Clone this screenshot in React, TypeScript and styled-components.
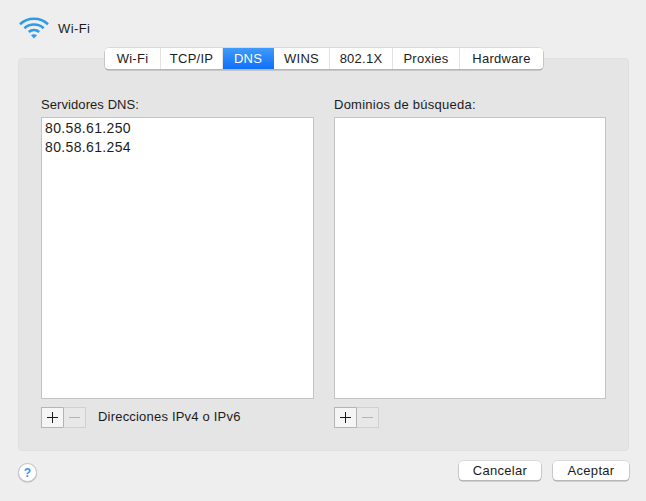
import React from 'react';
import styled, { createGlobalStyle } from 'styled-components';

const tabs = ['Wi-Fi', 'TCP/IP', 'DNS', 'WINS', '802.1X', 'Proxies', 'Hardware'];
const tabWidths = [56, 62, 51, 56, 63, 67, 83];

const GlobalStyle = createGlobalStyle`
  html, body {
    margin: 0;
    padding: 0;
    background: #eeeeee;
    font-family: "Liberation Sans", Arial, sans-serif;
    font-size: 13px;
    color: #1c1c1c;
  }
`;

const WifiIcon = () => (
  <svg width="30" height="24" viewBox="0 0 30 24" fill="none" stroke="#2f9ae8" strokeWidth="2.6">
    <path d="M1 8.2C8.6 .9 21.4 .9 29 8.2" />
    <path d="M5.4 12.2C10.6 7.3 19.4 7.3 24.6 12.2" />
    <path d="M9.8 16C12.7 13.3 17.3 13.3 20.2 16" />
    <path d="M15 22.4l-3-3.2c1.8-1.2 4.2-1.2 6 0z" fill="#2f9ae8" stroke="none" />
  </svg>
);

const ListControls = ({ children }: { children?: React.ReactNode }) => (
  <ControlRow>
    <SegmentGroup>
      <SquareButton>
        <svg width="13" height="13" viewBox="0 0 13 13" stroke="#1b1b1b" strokeWidth="1">
          <path d="M6.5 1v11M1 6.5h11" />
        </svg>
      </SquareButton>
      <SquareButton $disabled>
        <svg width="13" height="13" viewBox="0 0 13 13" stroke="#b4b4b4" strokeWidth="1">
          <path d="M1 6.5h11" />
        </svg>
      </SquareButton>
    </SegmentGroup>
    {children}
  </ControlRow>
);

const App: React.FC = () => {
  return (
    <>
      <GlobalStyle />
      <Window>
        <Header>
          <WifiIcon />
          <Title>Wi-Fi</Title>
        </Header>

        <TabBar>
          {tabs.map((tab, i) => (
            <Tab key={tab} $active={tab === 'DNS'} $width={tabWidths[i]}>
              {tab}
            </Tab>
          ))}
        </TabBar>

        <Panel>
          <Column>
            <ColumnLabel>Servidores DNS:</ColumnLabel>
            <ListBox>
              <ListItem>80.58.61.250</ListItem>
              <ListItem>80.58.61.254</ListItem>
            </ListBox>
            <ListControls>
              <Hint>Direcciones IPv4 o IPv6</Hint>
            </ListControls>
          </Column>
          <Column>
            <ColumnLabel $wide>Dominios de búsqueda:</ColumnLabel>
            <ListBox />
            <ListControls />
          </Column>
        </Panel>

        <Footer>
          <HelpButton>?</HelpButton>
          <FooterActions>
            <PushButton $width={82}>Cancelar</PushButton>
            <PushButton $width={76}>Aceptar</PushButton>
          </FooterActions>
        </Footer>
      </Window>
    </>
  );
};

const Window = styled.div`
  width: 646px;
  height: 501px;
  padding: 0 17px 0 18px;
  box-sizing: border-box;
  overflow: hidden;
  background: #eeeeee;
`;

const Header = styled.header`
  display: flex;
  align-items: center;
  height: 48px;
  gap: 9px;
  padding: 8px 0 0 1px;
  box-sizing: border-box;
`;

const Title = styled.span`
  font-size: 13px;
  letter-spacing: 0.4px;
`;

const TabBar = styled.nav`
  position: relative;
  z-index: 1;
  display: flex;
  width: max-content;
  height: 21px;
  margin: 0 0 -11px 87px;
  border-radius: 4px;
  background: #fff;
  box-shadow: 0 0 0 0.5px #c6c6c6, 0 1px 0 0.5px #a8a8a8;
  overflow: hidden;
`;

const Tab = styled.div<{ $active?: boolean; $width: number }>`
  display: flex;
  align-items: center;
  justify-content: center;
  width: ${p => p.$width}px;
  box-sizing: border-box;
  font-size: 13px;
  letter-spacing: 0.25px;
  color: ${p => (p.$active ? '#fff' : '#1c1c1c')};
  background: ${p => (p.$active ? 'linear-gradient(#3f9bfb, #0f6ffa)' : '#fff')};
  border-right: 1px solid ${p => (p.$active ? 'transparent' : '#e2e2e2')};
  &:last-child {
    border-right: 0;
  }
`;

const Panel = styled.main`
  display: grid;
  grid-template-columns: 273px 272px;
  column-gap: 20px;
  height: 393px;
  padding: 36px 23px 0 22px;
  box-sizing: border-box;
  background: #e5e5e5;
  border: 1px solid #e0e0e0;
  border-radius: 4px;
`;

const Column = styled.section`
  display: flex;
  flex-direction: column;
  min-width: 0;
`;

const ColumnLabel = styled.div<{ $wide?: boolean }>`
  height: 22px;
  line-height: 20px;
  font-size: 13px;
  letter-spacing: ${p => (p.$wide ? '0.25px' : '0.08px')};
`;

const ListBox = styled.div`
  height: 282px;
  padding: 1px 3px;
  box-sizing: border-box;
  background: #fff;
  border: 1px solid #c4c4c4;
`;

const ListItem = styled.div`
  height: 19px;
  line-height: 19px;
  font-size: 14px;
  letter-spacing: 0.35px;
`;

const ControlRow = styled.div`
  display: flex;
  align-items: center;
  margin-top: 8px;
`;

const SegmentGroup = styled.div`
  display: flex;
  flex: none;
`;

const SquareButton = styled.div<{ $disabled?: boolean }>`
  display: flex;
  align-items: center;
  justify-content: center;
  width: 23px;
  height: 21px;
  box-sizing: border-box;
  background: ${p => (p.$disabled ? '#e8e8e8' : '#f5f5f5')};
  border: 1px solid ${p => (p.$disabled ? '#d0d0d0' : '#b4b4b4')};
  & + & {
    margin-left: -1px;
    border-left-color: #b4b4b4;
  }
`;

const Hint = styled.span`
  margin: -2px 0 0 12px;
  font-size: 13px;
  letter-spacing: 0.2px;
`;

const Footer = styled.footer`
  display: flex;
  align-items: flex-start;
  justify-content: space-between;
  margin-top: 10px;
`;

const HelpButton = styled.div`
  display: flex;
  align-items: center;
  justify-content: center;
  width: 17px;
  height: 17px;
  margin-top: 2px;
  border-radius: 50%;
  background: #fff;
  border: 0.5px solid #c8c8c8;
  box-shadow: 0 0.5px 1px rgba(0, 0, 0, 0.25);
  color: #3d8ff5;
  font-size: 12px;
  font-weight: 700;
`;

const FooterActions = styled.div`
  display: flex;
  gap: 12px;
`;

const PushButton = styled.div<{ $width: number }>`
  display: flex;
  align-items: center;
  justify-content: center;
  width: ${p => p.$width}px;
  height: 19px;
  border-radius: 4px;
  background: #fff;
  box-shadow: 0 0 0 0.5px #c6c6c6, 0 1px 0 0.5px #ababab;
  font-size: 13px;
  letter-spacing: 0.3px;
`;

export default App;
